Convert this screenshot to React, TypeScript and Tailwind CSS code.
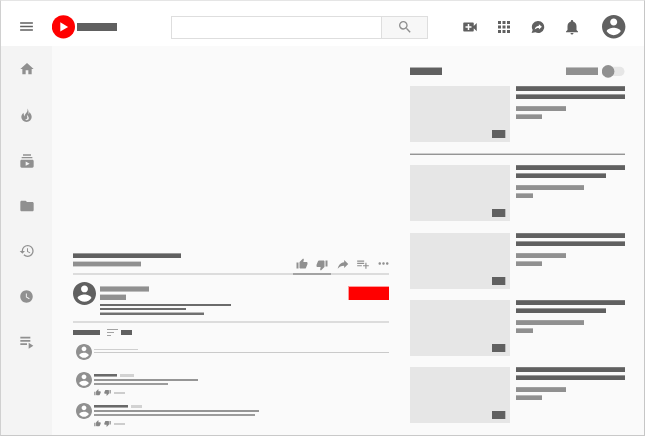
import React from "react";
import {
  MdApps,
  MdFolder,
  MdHistory,
  MdHome,
  MdMenu,
  MdMoreHoriz,
  MdNotifications,
  MdReply,
  MdSearch,
  MdSubscriptions,
  MdThumbDown,
  MdThumbUp,
  MdVideoCall,
  MdWatchLater,
} from "react-icons/md";

/** A placeholder block standing in for a piece of text. */
function Bar({ className }: { className: string }) {
  return <div className={`shrink-0 ${className}`} />;
}

/** Round user silhouette; the circle fills the whole box. */
function Avatar({ className }: { className: string }) {
  return (
    <svg viewBox="2 2 20 20" className={`block shrink-0 ${className}`} fill="currentColor">
      <circle cx="12" cy="12" r="9" fill="#fff" />
      <path d="M12 2C6.48 2 2 6.48 2 12s4.48 10 10 10 10-4.48 10-10S17.52 2 12 2zm0 3c1.66 0 3 1.34 3 3s-1.34 3-3 3-3-1.34-3-3 1.34-3 3-3zm0 14.2c-2.5 0-4.71-1.28-6-3.22.03-1.99 4-3.08 6-3.08 1.99 0 5.97 1.09 6 3.08-1.29 1.94-3.5 3.22-6 3.22z" />
    </svg>
  );
}

function Header() {
  return (
    <header className="flex h-[45px] shrink-0 items-center bg-white pt-[7px] text-[#606060]">
      <MdMenu className="mb-px ml-[17px] size-[17px] shrink-0" />
      <svg viewBox="0 0 24 24" className="ml-[17px] size-6 shrink-0">
        <circle cx="11.4" cy="11.8" r="11.6" fill="#f00" />
        <path d="M8.3 7.3v9.2l7.8-4.6z" fill="#fff" />
      </svg>
      <Bar className="ml-px h-2 w-[40px] bg-[#606060]" />
      <div className="ml-[54px] flex h-[23px] w-[257px] shrink-0 border border-[#dedede]">
        <div className="w-[209px] bg-white" />
        <div className="flex flex-1 items-center justify-center border-l border-[#dedede] bg-[#f7f7f7] text-[#8e8e8e]">
          <MdSearch className="size-4" />
        </div>
      </div>
      <MdVideoCall className="ml-[33px] size-[18px] shrink-0" />
      <MdApps className="ml-4 size-[18px] shrink-0" />
      <svg viewBox="0 0 14 14" className="ml-[18px] size-[14px] shrink-0">
        <path d="M7.2 1a6 6 0 1 1-2.8 11.3L.6 13l1.1-3A6 6 0 0 1 7.2 1z" fill="currentColor" />
        <path d="M7.9 4.2l3 2.6-3 2.6V7.9c-2 0-3.3.5-4.2 1.7.3-2 1.600-3.600 4.200-3.900z" fill="#fff" />
      </svg>
      <MdNotifications className="ml-[18px] size-[18px] shrink-0" />
      <svg viewBox="2 2 20.500 20.500" className="ml-[21px] size-6 shrink-0" fill="currentColor">
        <path d="M12 2C6.48 2 2 6.48 2 12s4.48 10 10 10 10-4.48 10-10S17.52 2 12 2zm0 3c1.66 0 3 1.34 3 3s-1.34 3-3 3-3-1.34-3-3 1.34-3 3-3zm0 14.2c-2.5 0-4.71-1.28-6-3.22.03-1.99 4-3.08 6-3.08 1.99 0 5.97 1.09 6 3.08-1.29 1.94-3.5 3.22-6 3.22z" />
      </svg>
    </header>
  );
}

function Sidebar() {
  return (
    <nav className="flex w-[51px] shrink-0 flex-col items-center bg-[#f4f4f4] pt-[15px] text-[#909090]">
      <MdHome className="size-4 shrink-0" />
      <svg viewBox="0 0 24 24" className="mt-[31px] size-[15px] shrink-0" fill="currentColor">
        <path d="M13.500 0.700C14 4 13.500 6 11.500 8C9.500 10 9 11.500 9.300 13.500C8 12 7.300 10 7.300 7.500C5 9.500 3.700 12 3.700 14.500A8.300 7.800 0 0 0 20.300 14.500C20.300 11.500 19 9 16.500 6.500C16.600 8 16.300 9 15.300 10C15.600 6.500 15.200 3 13.500 0.700Z" />
        <path d="M13.200 10.500C13 13 15.800 13.600 15.800 16.200A3.500 3.500 0 0 1 9.600 18.200C11.300 18.600 13 17.800 13.200 16C13.400 14.200 12 13 13.200 10.500Z" fill="#eeeeee" />
      </svg>
      <MdSubscriptions className="mt-[30px] size-4 shrink-0" />
      <MdFolder className="mt-[29px] size-4 shrink-0" />
      <MdHistory className="mt-[29px] size-4 shrink-0" />
      <MdWatchLater className="mt-[30px] size-[15px] shrink-0" />
      <svg viewBox="0 0 24 24" className="mt-[30px] size-4 shrink-0" fill="currentColor">
        <path d="M2 4h15v2.6H2zM2 9h15v2.6H2zM2 14h10v2.6H2zM14.500 13v9l7-4.500z" />
      </svg>
    </nav>
  );
}

function VideoInfo() {
  return (
    <section>
      <div className="flex h-[20px]">
        <div className="flex w-[220px] flex-col">
          <Bar className="h-[5px] w-[108px] border-t border-[#999] bg-[#606060]" />
          <Bar className="mt-[3px] h-[6px] w-[68px] border-y border-[#cfcfcf] bg-[#909090]" />
        </div>
        <div className="flex w-[96px] items-center pl-[3px] pt-px text-[#909090]">
          <MdThumbUp className="size-3 shrink-0" />
          <MdThumbDown className="ml-[8px] mt-[2px] size-3 shrink-0" />
          <MdReply className="ml-2 size-[14px] shrink-0 -scale-x-100" />
          <svg viewBox="0 0 24 24" className="ml-[6px] size-[14px] shrink-0" fill="currentColor">
            <path d="M14 10H2v2h12v-2zm0-4H2v2h12V6zm4 8v-4h-2v4h-4v2h4v4h2v-4h4v-2h-4zM2 16h8v-2H2v2z" />
          </svg>
          <MdMoreHoriz className="ml-[6px] size-[15px] shrink-0" />
        </div>
      </div>
      <div className="flex h-[2px] bg-[#dcdcdc]">
        <div className="ml-[220px] w-[38px] bg-[#a3a3a3]" />
      </div>
    </section>
  );
}

function Channel() {
  return (
    <section className="flex h-[48px] border-b-2 border-[#dcdcdc] pt-[7px]">
      <Avatar className="h-[23px] w-[23px] text-[#606060]" />
      <div className="ml-1 flex flex-1 flex-col pt-1">
        <Bar className="h-[6px] w-[49px] border-y border-[#bdbdbd] bg-[#909090]" />
        <Bar className="mt-[2px] h-[6px] w-[26px] border-t border-[#cfcfcf] bg-[#909090]" />
        <Bar className="mt-[4px] h-[2px] w-[131px] bg-[#6b6b6b]" />
        <Bar className="mt-[2px] h-[2px] w-[86px] bg-[#6b6b6b]" />
        <Bar className="mt-[2px] h-[3px] w-[104px] border-t border-[#b8b8b8] bg-[#707070]" />
      </div>
      <Bar className="mt-1 h-[14px] w-[41px] border-l border-t border-[#ff9a9a] bg-[#f00]" />
    </section>
  );
}

type CommentProps = { name: string; date: string; first: string; second: string };

function Comment({ name, date, first, second }: CommentProps) {
  return (
    <article className="flex h-[31px] pl-[3px]">
      <Avatar className="h-4 w-4 text-[#909090]" />
      <div className="ml-[2px] flex flex-col pt-[2px]">
        <div className="flex gap-[3px]">
          <Bar className={`h-[3px] border-b border-[#a8a8a8] bg-[#696969] ${name}`} />
          <Bar className={`h-[3px] bg-[#d2d2d2] ${date}`} />
        </div>
        <Bar className={`mt-[2px] h-[2px] bg-[#959595] ${first}`} />
        <Bar className={`mt-[2px] h-[2px] bg-[#9c9c9c] ${second}`} />
        <div className="mt-[4px] flex items-center text-[#858585]">
          <MdThumbUp className="size-[7px]" />
          <MdThumbDown className="ml-[3px] size-[7px]" />
          <Bar className="ml-[3px] h-[2px] w-[11px] bg-[#cdcdcd]" />
        </div>
      </div>
    </article>
  );
}

function Comments() {
  return (
    <section className="flex flex-col">
      <div className="mt-[5px] flex h-[8px] items-center">
        <Bar className="h-[5px] w-[27px] bg-[#606060]" />
        <div className="ml-[7px] flex w-[11px] flex-col gap-[2px]">
          <Bar className="h-px w-[11px] bg-[#a3a3a3]" />
          <Bar className="h-px w-[7px] bg-[#a3a3a3]" />
          <Bar className="h-px w-[4px] bg-[#a3a3a3]" />
        </div>
        <Bar className="ml-[3px] h-[5px] w-[11px] bg-[#606060]" />
      </div>
      <div className="mt-2 flex h-[28px] pl-[3px]">
        <Avatar className="h-4 w-4 text-[#909090]" />
        <div className="ml-[2px] flex-1 pt-[5px]">
          <Bar className="h-px w-[44px] bg-[#cfcfcf]" />
          <Bar className="mt-[2px] h-px w-[295px] bg-[#cacaca]" />
        </div>
      </div>
      <Comment name="w-[23px]" date="w-[14px]" first="w-[104px]" second="w-[74px]" />
      <Comment name="w-[34px]" date="w-[11px]" first="w-[165px]" second="w-[161px]" />
    </section>
  );
}

type VideoProps = { className: string; title: string; channel: string; views: string };

function Video({ className, title, channel, views }: VideoProps) {
  return (
    <article className={`flex h-[56px] shrink-0 gap-[6px] ${className}`}>
      <div className="flex w-[100px] shrink-0 items-end justify-end bg-[#e6e6e6] pb-1 pr-[4px]">
        <Bar className="h-2 w-[14px] border-r border-[#bbb] bg-[#606060]" />
      </div>
      <div className="flex flex-col">
        <Bar className="h-[5px] w-[109px] border-t border-[#7b7b7b] bg-[#606060]" />
        <Bar className={`mt-[3px] h-[5px] border-t border-[#999] bg-[#606060] ${title}`} />
        <Bar className={`mt-[7px] h-[5px] border-t border-[#a0a0a0] bg-[#909090] ${channel}`} />
        <Bar className={`mt-[3px] h-[5px] border-t border-[#b5b5b5] bg-[#909090] ${views}`} />
      </div>
    </article>
  );
}

function Recommendations() {
  return (
    <aside className="flex w-[215px] shrink-0 flex-col">
      <div className="mt-[19px] flex h-[13px] items-start">
        <Bar className="mt-[2px] h-[8px] w-[32px] border-t border-[#b0b0b0] bg-[#606060]" />
        <Bar className="ml-[124px] mt-[2px] h-[8px] w-[32px] border-t border-[#c0c0c0] bg-[#909090]" />
        <svg viewBox="0 0 23 13" className="ml-[4px] h-[13px] w-[23px]">
          <rect x="4" y="1.800" width="18.500" height="9.200" rx="4.600" fill="#e6e6e6" />
          <circle cx="6.100" cy="6.400" r="6.300" fill="#909090" />
        </svg>
      </div>
      <Video className="mt-2" title="w-[109px]" channel="w-[50px]" views="w-[26px]" />
      <Bar className="mt-[11px] h-[2px] border-t border-[#cecece] bg-[#959595]" />
      <Video className="mt-[10px]" title="w-[90px]" channel="w-[68px]" views="w-[17px]" />
      <Video className="mt-3" title="w-[109px]" channel="w-[50px]" views="w-[26px]" />
      <Video className="mt-[11px]" title="w-[90px]" channel="w-[68px]" views="w-[17px]" />
      <Video className="mt-[11px]" title="w-[109px]" channel="w-[50px]" views="w-[26px]" />
    </aside>
  );
}

export default function App() {
  return (
    <div className="flex h-[436px] w-[645px] flex-col overflow-hidden border border-b-[#c9c9c9] border-l-[#d0d0d0] border-r-[#c6c6c6] border-t-[#e5e5e5] bg-[#fafafa]">
      <Header />
      <div className="flex min-h-0 flex-1">
        <Sidebar />
        <main className="ml-[21px] w-[316px] shrink-0">
          <div className="h-[207px]" />
          <VideoInfo />
          <Channel />
          <Comments />
        </main>
        <div className="w-[21px] shrink-0" />
        <Recommendations />
      </div>
    </div>
  );
}
